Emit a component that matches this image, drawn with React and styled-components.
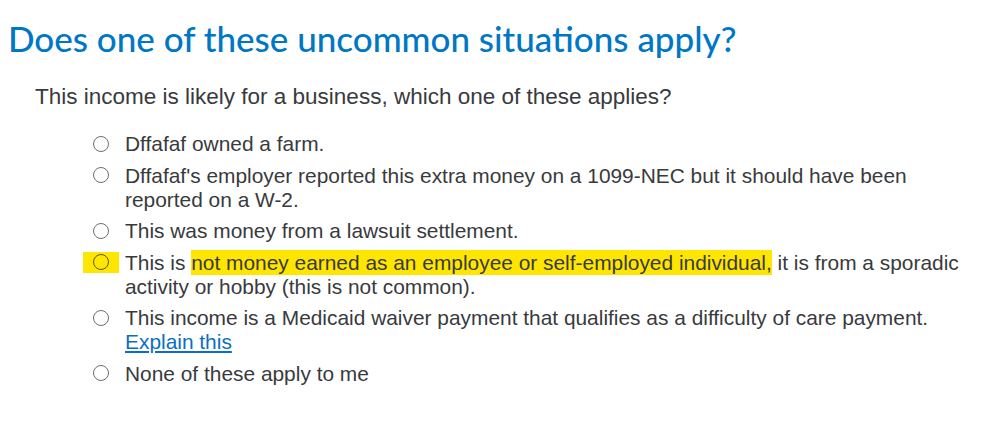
import React from 'react';
import styled, { createGlobalStyle } from 'styled-components';

const GlobalStyle = createGlobalStyle`
body {
    margin: 0;
    background: #fff;
    font-family: "Liberation Sans", Arial, sans-serif;
    color: #393a3d;
}
`

const Page = styled.main`
padding: 16px 8px 0 8px;
`

const Title = styled.h1`
margin: 0;
font-family: Lato, "Open Sans", sans-serif;
font-weight: 500;
font-size: 35px;
line-height: 44px;
color: #0077c5;
`

const Question = styled.p`
margin: 23px 0 0 27px;
font-size: 22.5px;
line-height: 28px;
`

const Options = styled.ul`
list-style: none;
margin: 21px 0 0 0;
padding: 0 0 0 75px;
display: flex;
flex-direction: column;
gap: 7.5px;
`

const Option = styled.li`
display: flex;
align-items: flex-start;
font-size: 20.9px;
line-height: 24px;
`

const RadioWrap = styled.span`
flex: none;
display: flex;
align-items: center;
justify-content: center;
width: 36px;
height: 21px;
margin: 1px 6px 0 0;
background: ${p => (p.$marked ? '#ffe600' : 'transparent')};
`

const Radio = styled.span`
display: block;
width: 16px;
height: 16px;
box-sizing: border-box;
border-radius: 50%;
border: 1.5px solid ${p => (p.$marked ? '#5e5800' : '#6e6e6e')};
background: ${p => (p.$marked ? 'transparent' : '#fff')};
`

const Label = styled.span`
max-width: 850px;
`

const Mark = styled.mark`
background: #ffe600;
color: inherit;
padding: 1px 0;
`

const Explain = styled.a`
color: #0a6fc2;
text-decoration: underline;
cursor: pointer;
`

const items = [
    { text: 'Dffafaf owned a farm.' },
    { text: "Dffafaf's employer reported this extra money on a 1099-NEC but it should have been reported on a W-2." },
    { text: 'This was money from a lawsuit settlement.' },
    {
        marked: true,
        text: (
            <>
                This is <Mark>not money earned as an employee or self-employed individual,</Mark> it is from a sporadic activity or hobby (this is not common).
            </>
        ),
    },
    {
        text: (
            <>
                This income is a Medicaid waiver payment that qualifies as a difficulty of care payment.
                <br />
                <Explain>Explain this</Explain>
            </>
        ),
    },
    { text: 'None of these apply to me' },
]

const App = () => {
    return (
        <>
            <GlobalStyle />
            <Page>
                <Title>Does one of these uncommon situations apply?</Title>
                <Question>This income is likely for a business, which one of these applies?</Question>
                <Options>
                    {items.map((item, i) => (
                        <Option key={i}>
                            <RadioWrap $marked={item.marked}>
                                <Radio $marked={item.marked} />
                            </RadioWrap>
                            <Label>{item.text}</Label>
                        </Option>
                    ))}
                </Options>
            </Page>
        </>
    )
}

export default App
